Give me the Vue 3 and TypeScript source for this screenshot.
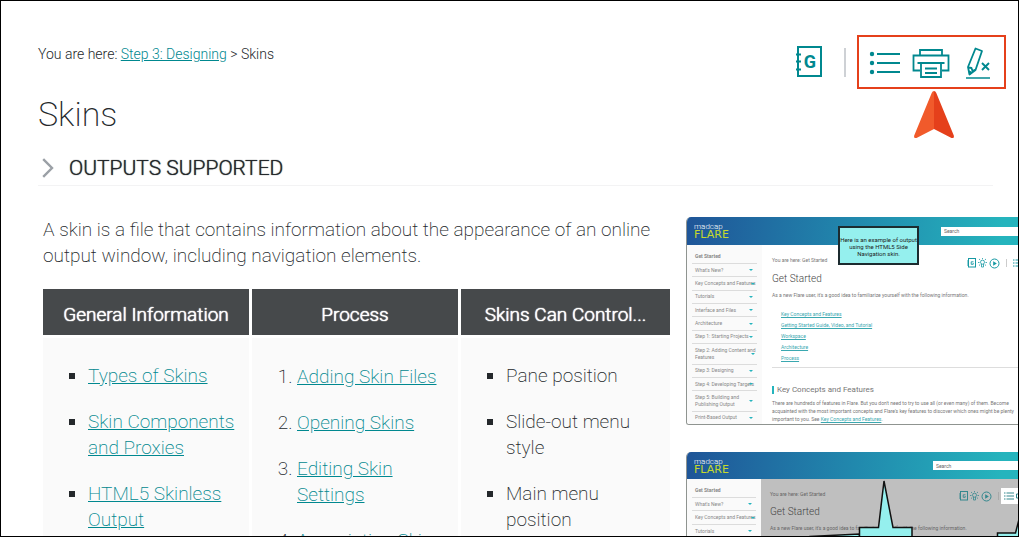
<script setup lang="ts">
interface Entry { text: string; href?: string }
interface Preview { id: string; variant: string; icons: string[] }

const general: Entry[] = [
  { text: 'Types of Skins', href: '#types' },
  { text: 'Skin Components and Proxies', href: '#components' },
  { text: 'HTML5 Skinless Output', href: '#skinless' },
]
const steps: Entry[] = [
  { text: 'Adding Skin Files', href: '#adding' },
  { text: 'Opening Skins', href: '#opening' },
  { text: 'Editing Skin Settings', href: '#editing' },
  { text: 'Associating Skins With Targets', href: '#associating' },
]
const controls: Entry[] = [
  { text: 'Pane position' },
  { text: 'Slide-out menu style' },
  { text: 'Main menu position' },
]
const menu: string[] = [
  "What's New?", 'Key Concepts and Features', 'Tutorials', 'Interface and Files', 'Architecture',
  'Step 1: Starting Projects', 'Step 2: Adding Content and\nFeatures', 'Step 3: Designing',
  'Step 4: Developing Targets', 'Step 5: Building and\nPublishing Output', 'Print-Based Output',
]
const topics: string[] = [
  'Key Concepts and Features', 'Getting Started Guide, Video, and Tutorial', 'Workspace', 'Architecture', 'Process',
]
const previews: Preview[] = [
  { id: 'side', variant: 'plain', icons: ['list'] },
  { id: 'toolbar', variant: 'dimmed', icons: ['list', 'print'] },
]
</script>

<template>
  <div class="page">
    <header class="top">
      <nav class="crumbs" aria-label="Breadcrumb">You are here: <a href="#step3">Step 3: Designing</a> &gt; Skins</nav>
      <div class="tools">
        <button class="tool" type="button" aria-label="Glossary">
          <svg width="28" height="34" viewBox="0 0 28 34">
            <rect x="3" y="2" width="23" height="29" fill="none" stroke="#00888f" stroke-width="2" />
            <path d="M1 9.500h5M1 16.500h5M1 24.500h5" stroke="#00888f" stroke-width="2" />
            <text x="15" y="23" text-anchor="middle" class="glyph">G</text>
          </svg>
        </button>
        <span class="rule"></span>
        <div class="group">
          <button class="tool" type="button" aria-label="Expand all">
            <svg width="32" height="26" viewBox="0 0 32 26">
              <g fill="#00888f"><circle cx="3" cy="4" r="2.200" /><circle cx="3" cy="13" r="2.200" /><circle cx="3" cy="22" r="2.200" /></g>
              <path d="M8 4h23M8 13h23M8 22h23" stroke="#00888f" stroke-width="2" />
            </svg>
          </button>
          <button class="tool" type="button" aria-label="Print">
            <svg width="38" height="32" viewBox="0 0 38 32" fill="none" stroke="#00888f" stroke-width="1.800">
              <path d="M8 8.500V3h22v5.500M8 23.500H1.500v-15h35v15H30M5.500 16h27M9 16v14h20V16M13 21.500h12M13 26h12" />
            </svg>
          </button>
          <button class="tool" type="button" aria-label="Remove highlight">
            <svg width="30" height="32" viewBox="-4 0 30 32" fill="none" stroke="#00888f">
              <path d="M10.500 1.500L17 4l-6.500 19-6 4.500L3 20zM3.500 20.500l3 .5 1 3 3-1.500" stroke-width="1.800" stroke-linejoin="round" />
              <path d="M4 24l.5 3.500 3-2z" fill="#00888f" />
              <path d="M17 16l7 7M24 16l-7 7" stroke-width="1.900" />
              <path d="M1 31h24" stroke-width="1.500" />
            </svg>
          </button>
          <svg class="pointer" width="42" height="50" viewBox="0 0 42 50">
            <path d="M21 1Q19.500 1 18.700 3L1.200 45.500Q.5 48.500 3.500 48L21 39z" fill="#f15a2b" />
            <path d="M21 1q1.500 0 2.300 2l17.500 42.500q.7 3-2.300 2.500L21 39z" fill="#e5401b" />
          </svg>
        </div>
      </div>
    </header>

    <h1>Skins</h1>
    <h2>
      <button class="toggle" type="button" aria-expanded="false">
        <svg width="12" height="20" viewBox="0 0 12 20" fill="none" stroke="#9ba0a6" stroke-width="2.400"><path d="M1.200 1.200L10 10l-8.800 8.800" /></svg>
        OUTPUTS SUPPORTED
      </button>
    </h2>

    <main class="body">
      <div class="article">
        <p class="intro">A skin is a file that contains information about the appearance of an online output window, including navigation elements.</p>
        <table>
          <thead>
            <tr><th scope="col">General Information</th><th scope="col">Process</th><th scope="col" class="last">Skins Can Control...</th></tr>
          </thead>
          <tbody>
            <tr>
              <td><ul><li v-for="e in general" :key="e.text"><a :href="e.href">{{ e.text }}</a></li></ul></td>
              <td class="steps"><ol><li v-for="e in steps" :key="e.text"><a :href="e.href">{{ e.text }}</a></li></ol></td>
              <td><ul><li v-for="e in controls" :key="e.text">{{ e.text }}</li></ul></td>
            </tr>
          </tbody>
        </table>
      </div>

      <aside class="previews">
        <section v-for="p in previews" :key="p.id" class="preview" :class="p.variant">
          <div class="banner">
            <div class="logo"><span class="maker">madcap</span><span class="brand">FLARE</span></div>
            <input class="search" type="text" placeholder="Search" aria-label="Search" />
          </div>
          <div class="split">
            <nav class="menu" aria-label="Contents">
              <div class="entry first">Get Started</div>
              <div v-for="m in menu" :key="m" class="entry"><span>{{ m }}</span><i class="caret"></i></div>
            </nav>
            <div class="sheet">
              <div class="where">
                <span>You are here: Get Started</span>
                <div class="mini">
                  <svg width="9" height="10" viewBox="0 0 9 10" fill="none" stroke="currentColor"><rect x="1.500" y=".5" width="7" height="8.500" /><path d="M0 3h2M0 5h2M0 7h2M6.500 3.800H4.200v2.500h2V5" stroke-width=".9" /></svg>
                  <svg width="9" height="10" viewBox="0 0 9 10" fill="none" stroke="currentColor" stroke-width=".8"><circle cx="4.500" cy="4.200" r="2" /><path d="M3.500 6v3h2V6M4.500 0v1.200M0 4.500h1.500M7.500 4.500H9M1 1l1.200 1M8 1L6.800 2M1 7.500l1.200-.9M8 7.500l-1.200-.9" /></svg>
                  <svg width="11" height="11" viewBox="0 0 11 11"><circle cx="5.500" cy="5.500" r="4.500" fill="none" stroke="currentColor" /><path d="M4.200 3.200v4.600l3.600-2.300z" fill="currentColor" /></svg>
                  <span class="bar"></span>
                  <div class="extra">
                    <template v-for="i in p.icons" :key="i">
                      <svg v-if="i === 'list'" width="10" height="10" viewBox="0 0 10 10" stroke="currentColor"><path d="M0 2h1.500M0 5h1.500M0 8h1.500M2.500 2H10M2.500 5H10M2.500 8H10" /></svg>
                      <svg v-else width="11" height="10" viewBox="0 0 11 10" fill="none" stroke="currentColor"><path d="M2.500 3V.5h6V3M2.500 7H.5V3h10v4h-2M2.500 5.500h6v4h-6z" /></svg>
                    </template>
                  </div>
                </div>
              </div>
              <h3>Get Started</h3>
              <p class="lead">As a new Flare user, it's a good idea to familiarize yourself with the following information.</p>
              <ul class="topics"><li v-for="t in topics" :key="t"><a href="#topic">{{ t }}</a></li></ul>
              <h4>Key Concepts and Features</h4>
              <p class="detail">There are hundreds of features in Flare. But you don't need to try to use all (or even many) of them. Become<br />acquainted with the most important concepts and Flare's key features to discover which ones might be plenty<br />important to you. See <a href="#key">Key Concepts and Features</a>.</p>
            </div>
          </div>
          <div v-if="p.id === 'side'" class="note">Here is an example of output using the HTML5 Side Navigation skin.</div>
          <svg v-else class="balloons" width="333" height="100" viewBox="0 0 333 100" fill="#95f0ee" stroke="#111" stroke-width="1.500">
            <path d="M124 100V84.500l49.500-2.500v18z" />
            <path d="M173.500 100V75.500h19L198 29l9 46.500h19V100z" />
            <path d="M311.500 100V81h18L340 40v60z" />
          </svg>
        </section>
      </aside>
    </main>
  </div>
</template>

<style>
html, body { margin: 0; }
</style>

<style scoped>
* { box-sizing: border-box; }
.page {
  height: 100vh; overflow: hidden; border: 1px solid #000; background: #fff;
  font-family: Roboto, "Liberation Sans", sans-serif; font-weight: 200; color: #24282b;
}
a { color: #00888f; }
button { font: inherit; color: inherit; background: none; border: 0; padding: 0; cursor: pointer; }
svg { display: block; }
.top { display: flex; justify-content: space-between; align-items: flex-start; padding: 34px 12px 0 37px; }
.crumbs { font-size: 14px; line-height: 20px; margin-top: 9px; font-weight: 300; }
.tools { display: flex; align-items: center; }
.glyph { font: 700 18px Roboto, sans-serif; fill: #00888f; }
.rule { width: 2px; height: 29px; background: #ced1d5; margin: 0 11px 0 21px; }
.group {
  position: relative; display: flex; align-items: center; gap: 11px;
  height: 54px; padding: 2px 13px 0 10px; border: 2px solid #e5401b;
}
.pointer { position: absolute; top: 53px; left: 54px; }
h1 { margin: 5px 0 0 37px; font-size: 34px; line-height: 40px; font-weight: 200; }
h2 {
  margin: 20px 25px 0 37px; padding: 0 0 3px 4px; border-bottom: 1px solid #f3f3f4;
  font-size: 22px; line-height: 28px; font-weight: 300;
}
.toggle { display: flex; align-items: center; gap: 15px; font-size: 21px; text-shadow: 0 0 1px currentColor; }
.body { display: grid; grid-template-columns: 627fr 332fr; column-gap: 16px; padding: 31px 0 0 42px; }
.article, .previews { min-width: 0; }
.intro { margin: 0 0 20px; font-size: 19px; line-height: 26px; }
table { width: calc(100% + 6px); table-layout: fixed; border-collapse: separate; border-spacing: 3px; margin: -3px; }
th { height: 46px; padding: 6px 0 0; background: #46494b; color: #fff; font-size: 19px; line-height: 26px; font-weight: 300; text-shadow: 0 0 1px currentColor, 0 0 1px currentColor; }
th.last { width: 209px; }
td { padding: 25px 10px 0 45px; background: #fafafa; vertical-align: top; font-size: 19px; line-height: 26px; }
.steps { padding-top: 26px; }
td ul, td ol { margin: 0; padding: 0; }
td ul { list-style: square; }
td li { margin-bottom: 20px; }

.previews { overflow: hidden; }
.preview { position: relative; overflow: hidden; height: 208px; margin-bottom: 27px; border: solid #8f9490; border-width: 0 0 1px 1px; border-radius: 5px 0 0 3px; font-size: 5px; line-height: 8px; color: #777; font-weight: 400; display: flex; flex-direction: column; }
.banner { flex: none; height: 28px; display: flex; justify-content: space-between; align-items: center; padding-left: 7px; background: linear-gradient(95deg, #1f5598, #2188ad 50%, #25b4bd 95%); }
.logo { display: flex; flex-direction: column; }
.maker { color: #fff; font-size: 8px; line-height: 7px; font-weight: 300; }
.brand { color: #c5d92d; font: 11px/9px "DejaVu Sans", sans-serif; }
.search { width: 77px; height: 9px; border: 0; border-radius: 0; padding: 0 3px; background: #fff; font: 5px Roboto, sans-serif; }
.search::placeholder { color: #666; }
.split { flex: 1; display: flex; min-height: 0; }
.menu { flex: none; width: 75px; padding: 0 5px; background: #fafafa; display: flex; flex-direction: column; color: #888; line-height: 7px; }
.entry { flex: 1 1 auto; display: flex; align-items: center; justify-content: space-between; padding: 2px 4px 2px 3px; border-bottom: 1px solid #dcdcdc; }
.entry:last-child { border: 0; }
.entry.first { flex: none; height: 19px; padding-top: 6px; font-weight: 700; }
.entry span { flex: 0 1 auto; white-space: pre; margin-right: -5px; }
.caret { border: solid transparent; border-width: 2px 2px 0; border-top-color: #25b4bd; }
.sheet { flex: 1; min-width: 0; padding: 11px 0 0 10px; white-space: nowrap; }
.where { display: flex; justify-content: space-between; }
.mini { display: flex; align-items: center; gap: 2px; color: #1699a3; height: 14px; }
.bar { width: 1px; height: 8px; background: #ccc; margin: 0 4px 0 4px; }
.extra { display: flex; gap: 2px; width: 5px; overflow: hidden; }
.extra svg { flex: none; }
h3 { margin: 3px 0 6px; font-size: 10px; line-height: 12px; font-weight: 300; color: #444; }
.lead { margin: 0 0 10px; }
.topics { list-style: none; margin: 0; padding: 0 0 3px 9px; line-height: 11px; border-bottom: 1px solid #ddd; }
.preview a { color: #3aa8b0; }
h4 { margin: 18px 0 5px; padding-left: 3px; border-left: 2px solid #25b4bd; font-size: 8px; line-height: 8px; font-weight: 400; }
.detail { margin: 0; }
.note {
  position: absolute; left: 151px; top: 9px; width: 81px; height: 39px; padding: 8px 0 0;
  border: 2px solid #1c2b2f; background: #95f0ee; color: #222; font-size: 6px; line-height: 7px; text-align: center;
}
.balloons { position: absolute; left: -1px; top: 0; }
.dimmed .banner { height: 27px; }
.dimmed .search { width: 85px; }
.dimmed .menu { width: 74px; }
.dimmed .sheet { background: #bfbfbf; padding: 10px 0 0 9px; color: #666; }
.dimmed .where { line-height: 10px; }
.dimmed .mini { color: #35888e; }
.dimmed .bar { background: #aaa; margin: 0 0 0 4px; }
.dimmed .extra { width: 17px; background: #fff; padding: 3px 0 3px 3px; height: 16px; }
</style>
